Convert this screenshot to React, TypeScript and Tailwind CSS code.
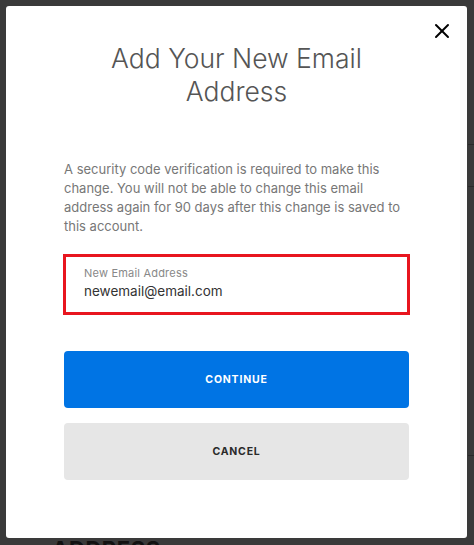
import { X } from 'lucide-react';

// Email change modal sitting over a dimmed account settings page.
export default function App() {
  return (
    <div
      className="relative w-[474px] h-[545px] overflow-hidden bg-[#3a3a3a] p-[6px]"
      style={{ fontFamily: 'Inter, "Noto Sans", sans-serif' }}
    >
      {/* bits of the page behind the overlay */}
      <div className="absolute left-[52px] top-[536px] text-[22px] leading-[26px] font-bold tracking-wide text-[#111]">ADDRESS</div>
      <div className="absolute right-0 top-[144px] w-[6px] h-px bg-[#2a2a2a]" />
      <div className="absolute right-0 top-[186px] w-[6px] h-px bg-[#2a2a2a]" />
      <div className="absolute right-0 top-[455px] w-[6px] h-px bg-[#2a2a2a]" />

      <div className="relative z-10 flex flex-col h-[532px] w-[461px] rounded-[3px] bg-white px-[58px] pt-[36px]">
        <button className="absolute right-[13px] top-[13px] text-black">
          <X className="w-[24px] h-[24px]" strokeWidth={2} />
        </button>

        <h1 className="text-center text-[26.5px] leading-[33px] font-light text-[#555]">
          Add Your New Email
          <br />
          Address
        </h1>

        <p className="mt-[52px] whitespace-nowrap text-[13px] leading-[19px] text-[#777]">
          A security code verification is required to make this
          <br />
          change. You will not be able to change this email
          <br />
          address again for 90 days after this change is saved to
          <br />
          this account.
        </p>

        <div className="mt-[18px] -mx-px h-[61px] border-[3px] border-[#e8161f] px-[18px] pt-[9px]">
          <div className="text-[11px] leading-[14px] tracking-[0.2px] text-[#888]">New Email Address</div>
          <div className="mt-[2px] text-[13.5px] leading-[18px] text-[#333]">newemail@email.com</div>
        </div>

        <button className="mt-[36px] h-[57px] w-full rounded-[4px] bg-[#0074e4] text-[10.5px] font-bold tracking-[0.8px] text-white">
          CONTINUE
        </button>
        <button className="mt-[15px] h-[57px] w-full rounded-[4px] bg-[#e6e6e6] text-[10.5px] font-bold tracking-[0.8px] text-[#2a2a2a]">
          CANCEL
        </button>
      </div>
    </div>
  );
}
